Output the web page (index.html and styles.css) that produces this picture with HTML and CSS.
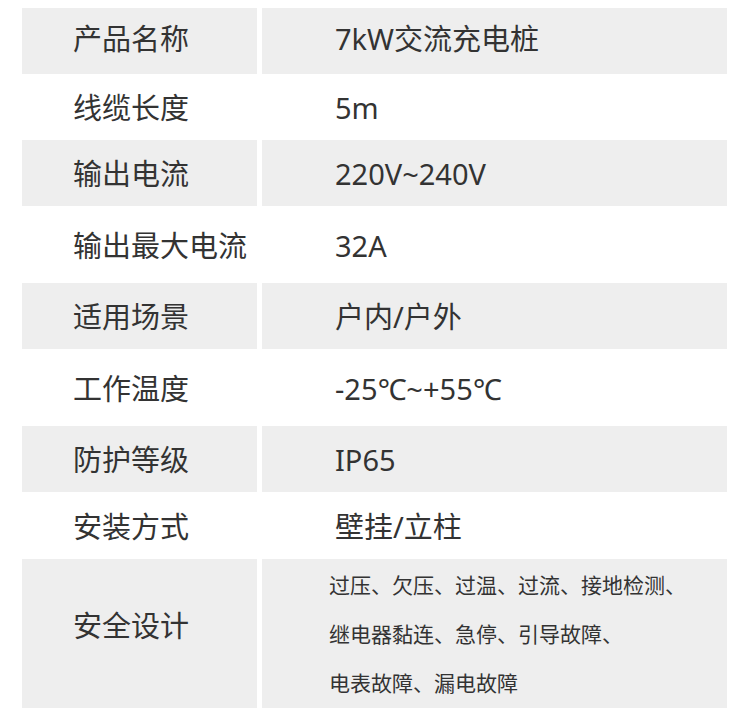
FILE: index.html
```html
<!DOCTYPE html>
<html lang="zh-CN">
<head>
<meta charset="utf-8">
<title>7kW交流充电桩 参数</title>
<link rel="stylesheet" href="styles.css">
</head>
<body>
<div class="spec">
  <div class="row shaded h66 first"><div class="key">产品名称</div><div class="val">7kW交流充电桩</div></div>
  <div class="row h66"><div class="key">线缆长度</div><div class="val">5m</div></div>
  <div class="row shaded h66"><div class="key">输出电流</div><div class="val">220V~240V</div></div>
  <div class="row h77"><div class="key">输出最大电流</div><div class="val">32A</div></div>
  <div class="row shaded h66"><div class="key">适用场景</div><div class="val">户内/户外</div></div>
  <div class="row h77"><div class="key">工作温度</div><div class="val">-25℃~+55℃</div></div>
  <div class="row shaded h66"><div class="key">防护等级</div><div class="val">IP65</div></div>
  <div class="row h67"><div class="key">安装方式</div><div class="val">壁挂/立柱</div></div>
  <div class="row shaded tall"><div class="key">安全设计</div><div class="val small">过压、欠压、过温、过流、接地检测、<br>继电器黏连、急停、引导故障、<br>电表故障、漏电故障</div></div>
</div>
</body>
</html>
```

FILE: styles.css
```css
html, body {
  margin: 0;
  padding: 0;
  background: #ffffff;
}
body {
  width: 750px;
  height: 708px;
  overflow: hidden;
  font-family: "Noto Sans", "Noto Sans CJK SC", sans-serif;
  color: #333333;
}
.spec {
  padding: 8px 23px 0 22px;
  display: flex;
  flex-direction: column;
}
.row {
  display: flex;
  gap: 5px;
}
.h66 { height: 66px; }
.h67 { height: 67px; }
.h77 { height: 77px; }
.tall { height: 160px; }
.key, .val {
  display: flex;
  align-items: center;
  font-size: 29px;
  line-height: 1;
  padding-top: 1px;
  box-sizing: border-box;
}
.first .key, .first .val {
  padding-top: 0;
  padding-bottom: 6px;
}
.key {
  width: 235px;
  padding-left: 51px;
}
.val {
  flex: 1;
  padding-left: 73px;
}
.shaded .key, .shaded .val {
  background: #eeeeee;
}
.tall .key {
  align-items: flex-start;
  padding-top: 52px;
}
.val.small {
  align-items: flex-start;
  font-size: 21px;
  line-height: 49px;
  padding-left: 67px;
  padding-top: 2px;
}
```
